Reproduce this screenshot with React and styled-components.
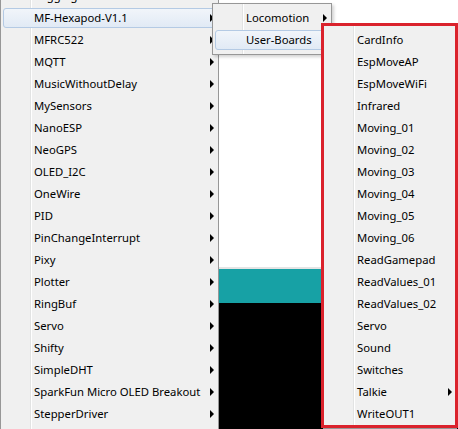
import React from 'react';
import styled, { createGlobalStyle, css } from 'styled-components';

const GlobalStyle = createGlobalStyle`
	html,
	body {
		margin: 0;
		padding: 0;
		background: #ffffff;
	}
	body {
		font-family: 'Noto Sans', 'Open Sans', 'Liberation Sans', sans-serif;
		font-size: 11.3px;
		color: #000000;
	}
`;

const libraries = [
	'Logging',
	'MF-Hexapod-V1.1',
	'MFRC522',
	'MQTT',
	'MusicWithoutDelay',
	'MySensors',
	'NanoESP',
	'NeoGPS',
	'OLED_I2C',
	'OneWire',
	'PID',
	'PinChangeInterrupt',
	'Pixy',
	'Plotter',
	'RingBuf',
	'Servo',
	'Shifty',
	'SimpleDHT',
	'SparkFun Micro OLED Breakout',
	'StepperDriver',
];

const hexapodFolders = [
	{ label: 'Locomotion', sub: true },
	{ label: 'User-Boards', sub: true, active: true },
];

const sketches = [
	'CardInfo',
	'EspMoveAP',
	'EspMoveWiFi',
	'Infrared',
	'Moving_01',
	'Moving_02',
	'Moving_03',
	'Moving_04',
	'Moving_05',
	'Moving_06',
	'ReadGamepad',
	'ReadValues_01',
	'ReadValues_02',
	'Servo',
	'Sound',
	'Switches',
	'Talkie',
	'WriteOUT1',
];

const Screen = styled.div`
	position: relative;
	display: flex;
	width: 458px;
	height: 429px;
	overflow: hidden;
	background: #ffffff;
`;

// the IDE window sitting behind the open menus
const Ide = styled.div`
	display: flex;
	flex: 1;
	flex-direction: column;
`;

const Editor = styled.div`
	flex: 1;
	background: #ffffff;
	border-bottom: 2px solid #e4e4e4;
`;

const StatusBar = styled.div`
	height: 34px;
	background: #17a1a5;
`;

const Console = styled.div`
	height: 126px;
	background: #000000;
`;

const Menu = styled.div`
	box-sizing: border-box;
	display: flex;
	flex-direction: column;
	width: ${(p) => p.$width}px;
	padding: 3px 2px;
	border: 1px solid #979797;
	background: #f0f0f0;
	box-shadow: 2px 2px 3px rgba(0, 0, 0, 0.18);

	&::before {
		content: '';
		position: absolute;
		top: 0;
		bottom: 0;
		left: 29px;
		width: 1px;
		background: #e2e3e3;
		box-shadow: 1px 0 0 #ffffff;
	}
`;

// long library list, scrolled so that its first entry is mostly hidden
const MainMenu = styled(Menu)`
	position: relative;
	flex: none;
	align-self: flex-start;
	margin-top: -19px;
	padding-bottom: 12px;
	box-shadow: none;
`;

const PopupMenu = styled(Menu)`
	position: absolute;
	left: ${(p) => p.$left}px;
	top: ${(p) => p.$top}px;
	z-index: ${(p) => p.$layer};
`;

const Item = styled.div`
	position: relative;
	z-index: 1;
	box-sizing: border-box;
	display: flex;
	flex: none;
	align-items: center;
	height: 20px;
	margin: 1px 0;
	padding: 0 1px 0 30px;
	border: 1px solid transparent;
	border-radius: 3px;
	white-space: nowrap;
	line-height: 18px;

	${(p) =>
		p.$active &&
		css`
			border-color: #b4cae4;
			background: linear-gradient(#f1f5fa, #e1eaf5);
		`}
`;

const Arrow = styled.span`
	width: 0;
	height: 0;
	margin-left: auto;
	border-style: solid;
	border-width: 4px 0 4px 4px;
	border-color: transparent transparent transparent #000000;
`;

const Callout = styled.div`
	position: absolute;
	left: 321px;
	top: 23px;
	z-index: 5;
	box-sizing: border-box;
	width: 137px;
	height: 405px;
	border: 3px solid #da222c;
	pointer-events: none;
`;

function MenuItem({ label, sub, active }) {
	return (
		<Item $active={active}>
			<span>{label}</span>
			{sub && <Arrow />}
		</Item>
	);
}

export default function App() {
	return (
		<>
			<GlobalStyle />
			<Screen>
				<MainMenu $width={219}>
					{libraries.map((name) => (
						<MenuItem key={name} label={name} sub active={name === 'MF-Hexapod-V1.1'} />
					))}
				</MainMenu>
				<Ide>
					<Editor />
					<StatusBar />
					<Console />
				</Ide>

				<PopupMenu $width={120} $left={212} $top={3} $layer={2}>
					{hexapodFolders.map((f) => (
						<MenuItem key={f.label} {...f} />
					))}
				</PopupMenu>

				<PopupMenu $width={134} $left={323} $top={25} $layer={3}>
					{sketches.map((name) => (
						<MenuItem key={name} label={name} sub={name === 'Talkie'} />
					))}
				</PopupMenu>
				<Callout />
			</Screen>
		</>
	);
}
